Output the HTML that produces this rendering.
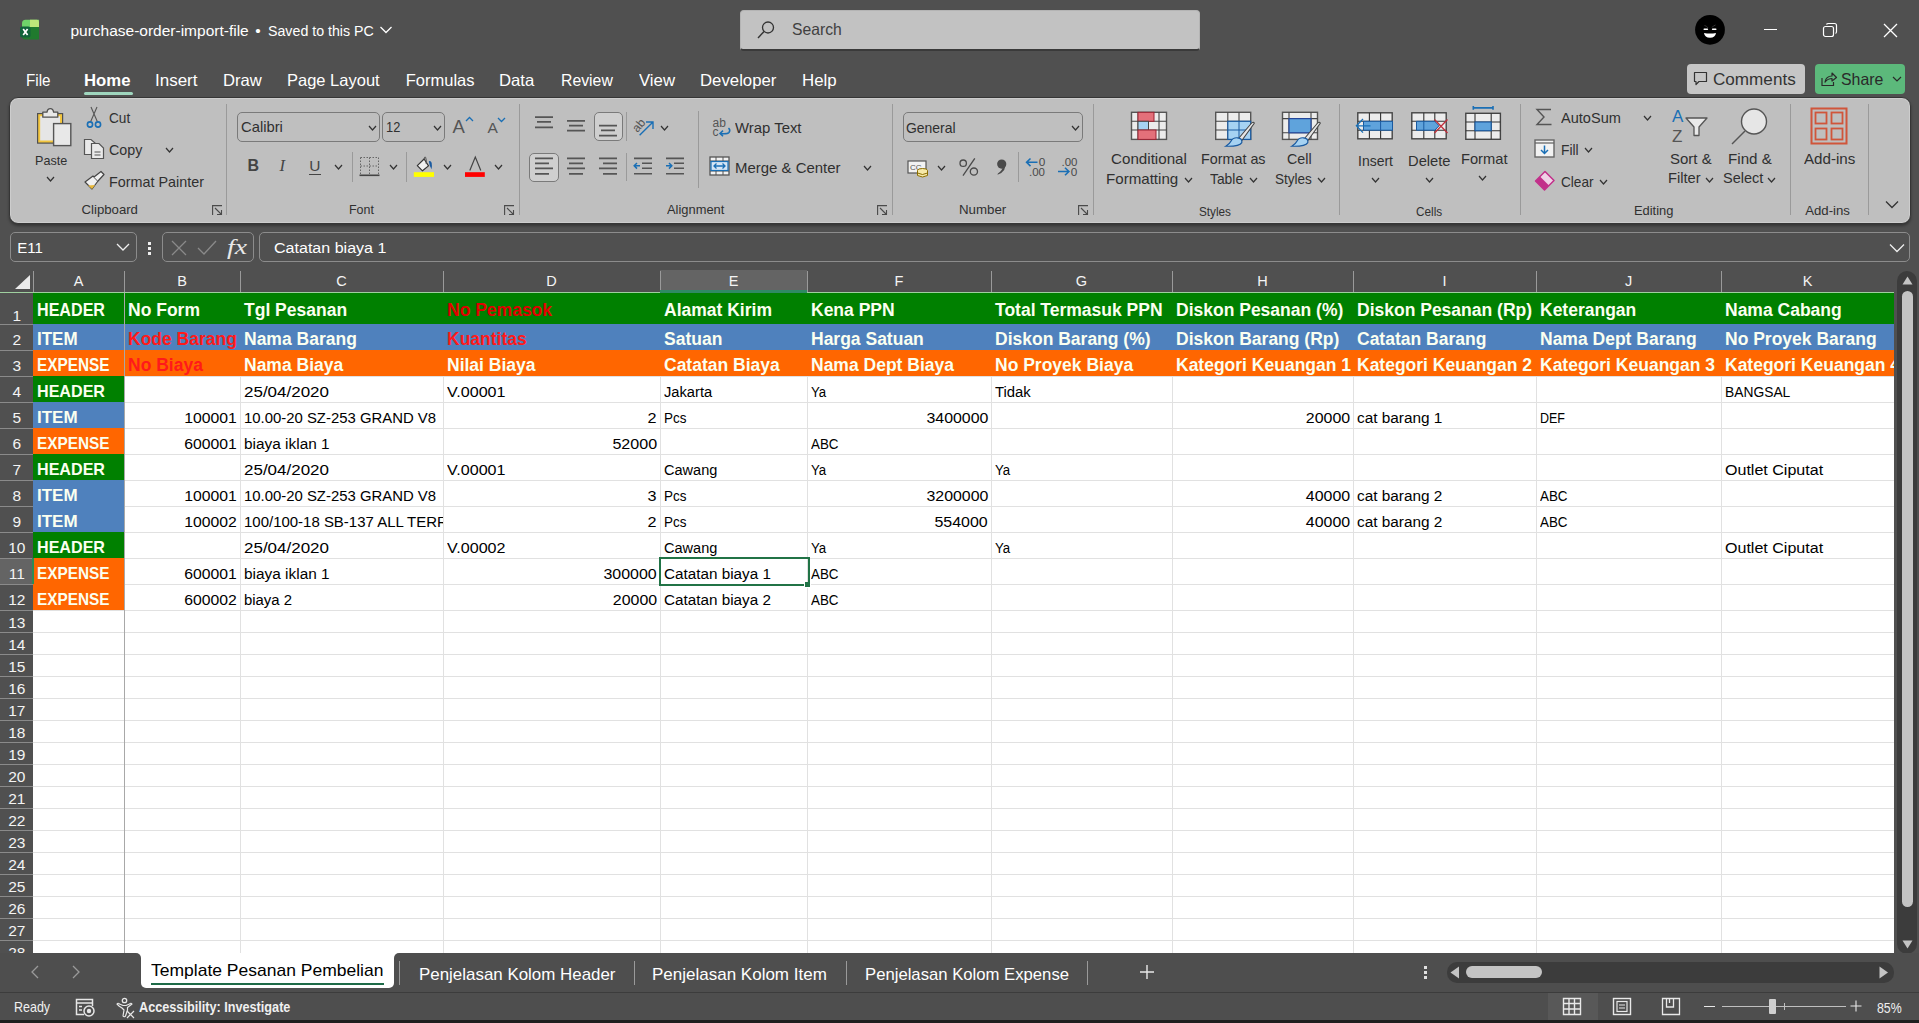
<!DOCTYPE html>
<html><head><meta charset="utf-8"><title>Excel</title><style>*{margin:0;padding:0;box-sizing:border-box}
html,body{width:1919px;height:1023px;overflow:hidden;background:#505050;font-family:"Liberation Sans",sans-serif;color:#fff;position:relative}
.a{position:absolute}
.t{position:absolute;white-space:nowrap}
svg.a{overflow:visible}
</style></head><body>
<svg class="a" style="left:19px;top:19px;" width="22" height="22" viewBox="0 0 22 22"><path d="M3 4.5 Q3 0.8 6.5 0.8 H20 V8 H3 Z" fill="#6fd36a"/><path d="M11 0.8 H18 Q20 0.8 20 3 V8 H11 Z" fill="#bfe67a"/><path d="M3 8 H20 V20.5 H6.5 Q3 20.5 3 17 Z" fill="#207a2e"/><rect x="1" y="7.4" width="10.5" height="11" rx="2" fill="#10633a"/><path d="M4.2 10 L8.6 16 M8.6 10 L4.2 16" stroke="#fff" stroke-width="1.7"/></svg>
<div class="t" style="left:70.40px;top:22.88px;font-size:15.5px;line-height:15.5px;color:#ffffff;">purchase-order-import-file</div>
<div class="t" style="left:255.30px;top:23.38px;font-size:15.5px;line-height:15.5px;color:#fff;">•</div>
<div class="t" style="left:268.00px;top:22.88px;font-size:15.5px;line-height:15.5px;color:#fff;transform:scaleX(0.9164);transform-origin:0 0;">Saved to this PC</div>
<svg class="a" style="left:379px;top:25px;" width="14" height="10" viewBox="0 0 14 10"><path d="M1.5 2 L7 7.5 L12.5 2" stroke="#fff" stroke-width="1.3" fill="none"/></svg>
<div class="a" style="left:740px;top:10px;width:460px;height:41px;background:#c2c2c2;border-radius:4px;border:1px solid #b4b4b4;border-bottom:2px solid #3a3a3a"></div>
<svg class="a" style="left:756px;top:20px;" width="20" height="20" viewBox="0 0 20 20"><circle cx="12" cy="7.5" r="5.5" stroke="#333" stroke-width="1.3" fill="none"/><path d="M8 11.5 L2 18" stroke="#333" stroke-width="1.4"/></svg>
<div class="t" style="left:792.30px;top:21.23px;font-size:16.5px;line-height:16.5px;color:#404040;transform:scaleX(0.9506);transform-origin:0 0;">Search</div>
<svg class="a" style="left:1695px;top:15px;" width="30" height="30" viewBox="0 0 30 30"><circle cx="15" cy="14.8" r="14.9" fill="#000"/><path d="M9 18 Q15 19.2 21 18 Q20.3 22.8 15 22.8 Q9.7 22.8 9 18Z" fill="#fff"/><path d="M9.2 14.3 H12.4 M17.6 14.3 H20.8" stroke="#fff" stroke-width="1.5" stroke-linecap="round"/><path d="M9.5 10.5 Q12 11 13 13 M20.5 10 Q18 10.8 17 12.5" stroke="#3a3a3a" stroke-width="0.9" fill="none"/></svg>
<div class="a" style="left:1764px;top:29px;width:13px;height:1px;background:#fff"></div>
<svg class="a" style="left:1822px;top:22px;" width="16" height="16" viewBox="0 0 16 16"><rect x="1.5" y="4.5" width="10" height="10" rx="2" stroke="#fff" stroke-width="1.2" fill="none"/><path d="M4.5 2.5 Q4.8 1.5 6.5 1.5 L12.5 1.5 Q14.5 1.5 14.5 3.5 L14.5 9.5 Q14.5 11 13.5 11.5" stroke="#fff" stroke-width="1.2" fill="none"/></svg>
<svg class="a" style="left:1883px;top:23px;" width="15" height="15" viewBox="0 0 15 15"><path d="M1 1 L14 14 M14 1 L1 14" stroke="#fff" stroke-width="1.3"/></svg>
<div class="t" style="left:26.25px;top:72.23px;font-size:16.5px;line-height:16.5px;color:#ffffff;transform:scaleX(0.9215);transform-origin:0 0;">File</div>
<div class="t" style="left:155.00px;top:72.23px;font-size:16.5px;line-height:16.5px;color:#ffffff;transform:scaleX(1.0299);transform-origin:0 0;">Insert</div>
<div class="t" style="left:223.25px;top:72.23px;font-size:16.5px;line-height:16.5px;color:#ffffff;transform:scaleX(1.0064);transform-origin:0 0;">Draw</div>
<div class="t" style="left:287.00px;top:72.23px;font-size:16.5px;line-height:16.5px;color:#ffffff;">Page Layout</div>
<div class="t" style="left:405.75px;top:72.23px;font-size:16.5px;line-height:16.5px;color:#ffffff;">Formulas</div>
<div class="t" style="left:499.20px;top:72.23px;font-size:16.5px;line-height:16.5px;color:#ffffff;transform:scaleX(1.0128);transform-origin:0 0;">Data</div>
<div class="t" style="left:561.20px;top:72.23px;font-size:16.5px;line-height:16.5px;color:#ffffff;transform:scaleX(0.9575);transform-origin:0 0;">Review</div>
<div class="t" style="left:639.00px;top:72.23px;font-size:16.5px;line-height:16.5px;color:#ffffff;transform:scaleX(1.0150);transform-origin:0 0;">View</div>
<div class="t" style="left:700.20px;top:72.23px;font-size:16.5px;line-height:16.5px;color:#ffffff;transform:scaleX(1.0158);transform-origin:0 0;">Developer</div>
<div class="t" style="left:801.80px;top:72.23px;font-size:16.5px;line-height:16.5px;color:#ffffff;transform:scaleX(1.0196);transform-origin:0 0;">Help</div>
<div class="t" style="left:84.20px;top:72.23px;font-size:16.5px;line-height:16.5px;color:#ffffff;font-weight:bold;transform:scaleX(1.0143);transform-origin:0 0;">Home</div>
<div class="a" style="left:84px;top:92px;width:49px;height:3px;background:#9fd6be;border-radius:2px"></div>
<div class="a" style="left:1687px;top:64px;width:118px;height:30px;background:#c6c6c6;border-radius:4px"></div>
<svg class="a" style="left:1693px;top:71px;" width="16" height="16" viewBox="0 0 16 16"><path d="M1.5 1.5 H13.5 V10.5 H6 L3 13.5 V10.5 H1.5 Z" stroke="#333" stroke-width="1.2" fill="none" stroke-linejoin="round"/></svg>
<div class="t" style="left:1713.00px;top:71.03px;font-size:16.5px;line-height:16.5px;color:#333333;transform:scaleX(1.0367);transform-origin:0 0;">Comments</div>
<div class="a" style="left:1815px;top:64px;width:90px;height:30px;background:#5cb97b;border-radius:4px"></div>
<svg class="a" style="left:1820px;top:70px;" width="18" height="18" viewBox="0 0 18 18"><path d="M2 8 V15.5 H13.5 V12" stroke="#2a2a2a" stroke-width="1.2" fill="none"/><path d="M5 12 Q6 6 12 6 V3 L16.5 7.5 L12 11 V8.5 Q8 8.5 5 12Z" stroke="#2a2a2a" stroke-width="1.2" fill="none" stroke-linejoin="round"/></svg>
<div class="t" style="left:1841.40px;top:71.03px;font-size:16.5px;line-height:16.5px;color:#2a2a2a;transform:scaleX(0.9629);transform-origin:0 0;">Share</div>
<svg class="a" style="left:1892px;top:75px;" width="10" height="8" viewBox="0 0 10 8"><path d="M1 2 L5 6 L9 2" stroke="#2a2a2a" stroke-width="1.2" fill="none"/></svg>
<div class="a" style="left:9px;top:97px;width:1902px;height:127px;background:#bfbfbf;border-radius:9px;border:1px solid #363636;box-shadow:inset 0 0 0 1px #cdcdcd, 0 2px 3px rgba(0,0,0,0.35)"></div>
<svg class="a" style="left:35px;top:106px;" width="40" height="42" viewBox="0 0 40 42"><rect x="2.6" y="7.6" width="25" height="29.5" fill="#f3c63f" stroke="#505050" stroke-width="1.2"/><rect x="5.2" y="10.2" width="19.8" height="24.3" fill="#e6e6e6"/><path d="M7.8 11.2 V6.2 H12 Q12.5 2.6 15.3 2.6 Q18.1 2.6 18.6 6.2 H22.8 V11.2 Z" fill="#e8e8e8" stroke="#505050" stroke-width="1.3" stroke-linejoin="round"/><rect x="18.6" y="17.6" width="17.2" height="22" fill="#e8e8e8" stroke="#555" stroke-width="1.4"/></svg>
<div class="t" style="left:34.80px;top:154.30px;font-size:13px;line-height:13px;color:#303030;transform:scaleX(0.9686);transform-origin:0 0;">Paste</div>
<svg class="a" style="left:46px;top:176px;" width="9" height="6" viewBox="0 0 9 6"><path d="M1 1 L4.5 5 L8 1" stroke="#333" stroke-width="1.2" fill="none"/></svg>
<svg class="a" style="left:86px;top:106px;" width="16" height="23" viewBox="0 0 16 23"><path d="M4.5 16 L11 1 M11.5 16 L5 1" stroke="#555" stroke-width="1.1" fill="none"/><circle cx="4" cy="18.5" r="2.6" fill="none" stroke="#1a6fb5" stroke-width="1.6"/><circle cx="12" cy="18.5" r="2.6" fill="none" stroke="#1a6fb5" stroke-width="1.6"/></svg>
<div class="t" style="left:109.40px;top:110.95px;font-size:14px;line-height:14px;color:#303030;transform:scaleX(0.9730);transform-origin:0 0;">Cut</div>
<svg class="a" style="left:83px;top:138px;" width="23" height="22" viewBox="0 0 23 22"><path d="M1.5 1.5 H8 L12 5 V16.5 H1.5 Z" fill="#e9e9e9" stroke="#555" stroke-width="1.2"/><path d="M8.5 5.5 H16 L20.5 10 V20.5 H8.5 Z" fill="#e9e9e9" stroke="#555" stroke-width="1.2"/><path d="M11.5 14 H17.5 M11.5 17 H17.5" stroke="#555" stroke-width="1.1"/></svg>
<div class="t" style="left:109.40px;top:142.55px;font-size:14px;line-height:14px;color:#303030;transform:scaleX(1.0189);transform-origin:0 0;">Copy</div>
<svg class="a" style="left:165px;top:147px;" width="9" height="6" viewBox="0 0 9 6"><path d="M1 1 L4.5 5 L8 1" stroke="#333" stroke-width="1.2" fill="none"/></svg>
<svg class="a" style="left:83px;top:170px;" width="23" height="21" viewBox="0 0 23 21"><path d="M2 12 L10 6 L15 11 L9 19 Z" fill="#f0f0f0" stroke="#444" stroke-width="1.2" stroke-linejoin="round"/><path d="M5 15.5 L9 19 L12 15 Z" fill="#e8b83a"/><path d="M11 7 L18 1.5 L21 4.5 L15 11" fill="#f0f0f0" stroke="#444" stroke-width="1.2" stroke-linejoin="round"/></svg>
<div class="t" style="left:109.40px;top:174.98px;font-size:14.2px;line-height:14.2px;color:#303030;transform:scaleX(1.0116);transform-origin:0 0;">Format Painter</div>
<div class="t" style="left:81.50px;top:202.63px;font-size:13.2px;line-height:13.2px;color:#303030;">Clipboard</div>
<svg class="a" style="left:211.5px;top:204.5px;" width="11" height="11" viewBox="0 0 11 11"><path d="M0.5 0.5 H10.5 V10.5 H0.5 Z" stroke="none" fill="none"/><path d="M0.6 10 V0.6 H10" stroke="#4a4a4a" stroke-width="1.1" fill="none"/><path d="M3 3 L9.5 9.5 M9.5 5 V9.5 H5" stroke="#4a4a4a" stroke-width="1.1" fill="none"/></svg>
<div class="a" style="left:226px;top:104px;width:1px;height:111px;background:#9a9a9a"></div>
<div class="a" style="left:237px;top:112px;width:143px;height:30px;border:1px solid #7a7a7a;border-radius:5px"></div>
<div class="t" style="left:240.60px;top:120.43px;font-size:14.5px;line-height:14.5px;color:#303030;transform:scaleX(1.0196);transform-origin:0 0;">Calibri</div>
<svg class="a" style="left:368px;top:125px;" width="9" height="6" viewBox="0 0 9 6"><path d="M1 1 L4.5 5 L8 1" stroke="#333" stroke-width="1.2" fill="none"/></svg>
<div class="a" style="left:382px;top:112px;width:63px;height:30px;border:1px solid #7a7a7a;border-radius:5px"></div>
<div class="t" style="left:386.00px;top:120.43px;font-size:14.5px;line-height:14.5px;color:#303030;transform:scaleX(0.8866);transform-origin:0 0;">12</div>
<svg class="a" style="left:433px;top:125px;" width="9" height="6" viewBox="0 0 9 6"><path d="M1 1 L4.5 5 L8 1" stroke="#333" stroke-width="1.2" fill="none"/></svg>
<div class="t" style="left:452.50px;top:117.64px;font-size:18.5px;line-height:18.5px;color:#555;">A</div>
<svg class="a" style="left:465px;top:116px;" width="9" height="6" viewBox="0 0 9 6"><path d="M1 5 L4.5 1.5 L8 5" stroke="#1a6fb5" stroke-width="1.3" fill="none"/></svg>
<div class="t" style="left:487.50px;top:120.18px;font-size:15.5px;line-height:15.5px;color:#555;">A</div>
<svg class="a" style="left:497px;top:117px;" width="9" height="6" viewBox="0 0 9 6"><path d="M1 1 L4.5 4.5 L8 1" stroke="#1a6fb5" stroke-width="1.3" fill="none"/></svg>
<div class="t" style="left:247.50px;top:157.96px;font-size:16px;line-height:16px;color:#444;font-weight:bold;">B</div>
<div class="t" style="left:279.50px;top:157.53px;font-size:16.5px;line-height:16.5px;color:#444;font-style:italic;font-family:'Liberation Serif';">I</div>
<div class="t" style="left:309.20px;top:158.38px;font-size:15.5px;line-height:15.5px;color:#444;">U</div>
<div class="a" style="left:309px;top:174px;width:12px;height:1.3px;background:#444"></div>
<svg class="a" style="left:334px;top:164px;" width="9" height="6" viewBox="0 0 9 6"><path d="M1 1 L4.5 5 L8 1" stroke="#333" stroke-width="1.2" fill="none"/></svg>
<div class="a" style="left:352px;top:152px;width:1px;height:30px;background:#9a9a9a"></div>
<svg class="a" style="left:359px;top:156px;" width="21" height="21" viewBox="0 0 21 21"><path d="M1.5 1.5 H19.5 M1.5 1.5 V18 M19.5 1.5 V18 M10.5 1.5 V18 M1.5 10 H19.5" stroke="#666" stroke-width="1" stroke-dasharray="1.5 1.5" fill="none"/><path d="M0.5 19.3 H20.5" stroke="#444" stroke-width="1.6"/></svg>
<svg class="a" style="left:389px;top:164px;" width="9" height="6" viewBox="0 0 9 6"><path d="M1 1 L4.5 5 L8 1" stroke="#333" stroke-width="1.2" fill="none"/></svg>
<div class="a" style="left:406px;top:152px;width:1px;height:30px;background:#9a9a9a"></div>
<svg class="a" style="left:405px;top:150px;" width="85" height="30" viewBox="0 0 85 30"><path d="M12.3 15.6 L19.1 9 L23.5 15.9 L17.5 20.8 Z" fill="#f0f0f0" stroke="#333" stroke-width="1.2" stroke-linejoin="round"/><path d="M19.1 9.5 Q19.3 6.2 20.6 7.2 Q21.6 9.5 21.2 14" stroke="#555" stroke-width="1" fill="none"/><path d="M23.8 11.2 Q25.8 10.2 26.7 13 Q27.2 16.2 26.6 19.2 Q24.4 16 23.8 11.2 Z" fill="#1a5aa0"/><rect x="8.8" y="22.2" width="20.2" height="4.7" fill="#ffff00"/><path d="M64.8 20.5 L70.3 7.1 L75.8 20.5" stroke="#444" stroke-width="1.2" fill="none"/><rect x="60" y="22.2" width="19.8" height="4.7" fill="#ff0000"/></svg>
<svg class="a" style="left:443px;top:164px;" width="9" height="6" viewBox="0 0 9 6"><path d="M1 1 L4.5 5 L8 1" stroke="#333" stroke-width="1.2" fill="none"/></svg>
<svg class="a" style="left:494px;top:164px;" width="9" height="6" viewBox="0 0 9 6"><path d="M1 1 L4.5 5 L8 1" stroke="#333" stroke-width="1.2" fill="none"/></svg>
<div class="t" style="left:349.30px;top:202.53px;font-size:13.2px;line-height:13.2px;color:#303030;transform:scaleX(0.9465);transform-origin:0 0;">Font</div>
<svg class="a" style="left:503.5px;top:204.5px;" width="11" height="11" viewBox="0 0 11 11"><path d="M0.5 0.5 H10.5 V10.5 H0.5 Z" stroke="none" fill="none"/><path d="M0.6 10 V0.6 H10" stroke="#4a4a4a" stroke-width="1.1" fill="none"/><path d="M3 3 L9.5 9.5 M9.5 5 V9.5 H5" stroke="#4a4a4a" stroke-width="1.1" fill="none"/></svg>
<div class="a" style="left:518.5px;top:104px;width:1px;height:111px;background:#9a9a9a"></div>
<svg class="a" style="left:530px;top:110px;" width="30" height="35" viewBox="0 0 30 35"><path d="M5 7.2 H23 M7 11.8 H21 M5 17.3 H23" stroke="#555" stroke-width="1.7"/></svg>
<svg class="a" style="left:562px;top:110px;" width="30" height="35" viewBox="0 0 30 35"><path d="M5 10.8 H23 M7 15.7 H21 M5 20.7 H23" stroke="#555" stroke-width="1.7"/></svg>
<div class="a" style="left:593.5px;top:112px;width:29px;height:29px;border:1px solid #7a7a7a;border-radius:5px;background:#cfcfcf"></div>
<svg class="a" style="left:593px;top:110px;" width="30" height="35" viewBox="0 0 30 35"><path d="M6 15.7 H24 M8 20.3 H22 M6 25.6 H24" stroke="#555" stroke-width="1.7"/></svg>
<div class="a" style="left:625.5px;top:112px;width:1px;height:29px;background:#9a9a9a"></div>
<svg class="a" style="left:625px;top:108px;" width="40" height="34" viewBox="0 0 40 34"><text x="0" y="0" font-family="Liberation Sans" font-size="12" fill="#555" transform="translate(12.5 25) rotate(-50)">ab</text><path d="M14.6 27.2 L27.5 14.5 M21 14 H28 V21" stroke="#1a6fb5" stroke-width="1.4" fill="none"/></svg>
<svg class="a" style="left:660px;top:125px;" width="9" height="6" viewBox="0 0 9 6"><path d="M1 1 L4.5 5 L8 1" stroke="#333" stroke-width="1.2" fill="none"/></svg>
<div class="a" style="left:697.5px;top:111px;width:1px;height:77px;background:#9a9a9a"></div>
<svg class="a" style="left:708px;top:108px;" width="30" height="34" viewBox="0 0 30 34"><text x="4.5" y="18.6" font-family="Liberation Sans" font-size="12" fill="#555">ab</text><text x="4.5" y="27.9" font-family="Liberation Sans" font-size="12" fill="#555">c</text><path d="M20.5 20 Q22.8 22 21 24.5 Q19.5 26.2 12.5 25.6 M15 22.6 L12 25.4 L15 28.2" stroke="#1a6fb5" stroke-width="1.5" fill="none"/></svg>
<div class="t" style="left:735.20px;top:120.93px;font-size:14.5px;line-height:14.5px;color:#303030;transform:scaleX(1.0272);transform-origin:0 0;">Wrap Text</div>
<div class="a" style="left:529px;top:152.5px;width:30px;height:29px;border:1px solid #7a7a7a;border-radius:5px;background:#cfcfcf"></div>
<svg class="a" style="left:530px;top:150px;" width="30" height="35" viewBox="0 0 30 35"><path d="M5 8.4 H23 M5 13.3 H19 M5 18.3 H23 M5 23.8 H19" stroke="#555" stroke-width="1.7"/></svg>
<svg class="a" style="left:562px;top:150px;" width="30" height="35" viewBox="0 0 30 35"><path d="M5 8.4 H23 M7 13.3 H21 M5 18.3 H23 M7 23.8 H21" stroke="#555" stroke-width="1.7"/></svg>
<svg class="a" style="left:594px;top:150px;" width="30" height="35" viewBox="0 0 30 35"><path d="M5 8.4 H23 M9 13.3 H23 M5 18.3 H23 M9 23.8 H23" stroke="#555" stroke-width="1.7"/></svg>
<div class="a" style="left:625.5px;top:152.5px;width:1px;height:28.5px;background:#9a9a9a"></div>
<svg class="a" style="left:632px;top:150px;" width="24" height="30" viewBox="0 0 24 30"><path d="M2 8.4 H20 M10 13.3 H20 M10 18.3 H20 M2 23.8 H20" stroke="#555" stroke-width="1.6"/><path d="M8 15.8 H2.5 M5 13 L2.2 15.8 L5 18.6" stroke="#1a6fb5" stroke-width="1.5" fill="none"/></svg>
<svg class="a" style="left:664px;top:150px;" width="24" height="30" viewBox="0 0 24 30"><path d="M2 8.4 H20 M10 13.3 H20 M10 18.3 H20 M2 23.8 H20" stroke="#555" stroke-width="1.6"/><path d="M2 15.8 H7.5 M5 13 L7.8 15.8 L5 18.6" stroke="#1a6fb5" stroke-width="1.5" fill="none"/></svg>
<svg class="a" style="left:709px;top:156px;" width="21" height="21" viewBox="0 0 21 21"><rect x="1" y="1" width="19" height="18" fill="#f2f2f2" stroke="#555" stroke-width="1.3"/><path d="M1 5 H20 M1 15 H20 M7 1 V5 M14 1 V5 M7 15 V19 M14 15 V19" stroke="#555" stroke-width="1"/><rect x="2" y="5.5" width="17" height="9" fill="#d6e6f5" stroke="#1a6fb5" stroke-width="1.2"/><path d="M5 10 H16 M7.5 7.5 L5 10 L7.5 12.5 M13.5 7.5 L16 10 L13.5 12.5" stroke="#1a6fb5" stroke-width="1.3" fill="none"/></svg>
<div class="t" style="left:735.20px;top:160.93px;font-size:14.5px;line-height:14.5px;color:#303030;transform:scaleX(1.0308);transform-origin:0 0;">Merge &amp; Center</div>
<svg class="a" style="left:863px;top:165px;" width="9" height="6" viewBox="0 0 9 6"><path d="M1 1 L4.5 5 L8 1" stroke="#333" stroke-width="1.2" fill="none"/></svg>
<div class="t" style="left:666.50px;top:203.03px;font-size:13.2px;line-height:13.2px;color:#303030;transform:scaleX(0.9779);transform-origin:0 0;">Alignment</div>
<svg class="a" style="left:877px;top:204.5px;" width="11" height="11" viewBox="0 0 11 11"><path d="M0.5 0.5 H10.5 V10.5 H0.5 Z" stroke="none" fill="none"/><path d="M0.6 10 V0.6 H10" stroke="#4a4a4a" stroke-width="1.1" fill="none"/><path d="M3 3 L9.5 9.5 M9.5 5 V9.5 H5" stroke="#4a4a4a" stroke-width="1.1" fill="none"/></svg>
<div class="a" style="left:892px;top:104px;width:1px;height:111px;background:#9a9a9a"></div>
<div class="a" style="left:903px;top:112px;width:180px;height:30px;border:1px solid #7a7a7a;border-radius:5px"></div>
<div class="t" style="left:906.40px;top:120.63px;font-size:14.5px;line-height:14.5px;color:#303030;transform:scaleX(0.9615);transform-origin:0 0;">General</div>
<svg class="a" style="left:1071px;top:125px;" width="9" height="6" viewBox="0 0 9 6"><path d="M1 1 L4.5 5 L8 1" stroke="#333" stroke-width="1.2" fill="none"/></svg>
<svg class="a" style="left:907px;top:160px;" width="22" height="18" viewBox="0 0 22 18"><rect x="1" y="1" width="18" height="12" fill="#f2f2f2" stroke="#555" stroke-width="1.2"/><text x="3" y="10" font-family="Liberation Sans" font-size="8" fill="#555">CC</text><ellipse cx="15.5" cy="10.5" rx="5" ry="2" fill="#f6e9a8" stroke="#8a6d00" stroke-width="1"/><path d="M10.5 10.5 V15.5 Q15.5 18.5 20.5 15.5 V10.5 M10.5 13 Q15.5 16 20.5 13" fill="#f6e9a8" stroke="#8a6d00" stroke-width="1"/></svg>
<svg class="a" style="left:937px;top:165px;" width="9" height="6" viewBox="0 0 9 6"><path d="M1 1 L4.5 5 L8 1" stroke="#333" stroke-width="1.2" fill="none"/></svg>
<svg class="a" style="left:950px;top:150px;" width="40" height="35" viewBox="0 0 40 35"><circle cx="13.2" cy="13.2" r="3.2" stroke="#4a4a4a" stroke-width="1.3" fill="none"/><circle cx="23.9" cy="21.6" r="3.6" stroke="#4a4a4a" stroke-width="1.3" fill="none"/><path d="M24.8 8.3 L13 25.7" stroke="#4a4a4a" stroke-width="1.3"/></svg>
<svg class="a" style="left:990px;top:150px;" width="25" height="35" viewBox="0 0 25 35"><circle cx="11.7" cy="14.1" r="4.6" fill="#4a4a4a"/><path d="M14.8 11.5 Q17.5 21 7.5 24.8 L7.9 23.5 Q13 20 12.5 16.5 Z" fill="#4a4a4a"/></svg>
<div class="a" style="left:1018px;top:152px;width:1px;height:30px;background:#9a9a9a"></div>
<svg class="a" style="left:1020px;top:150px;" width="30" height="30" viewBox="0 0 30 30"><path d="M17.5 12.3 H7 M10.5 8.5 L6.6 12.3 L10.5 16.1" stroke="#1a6fb5" stroke-width="1.6" fill="none"/><text x="18.8" y="15.5" font-family="Liberation Sans" font-size="11.8" fill="#4a4a4a" transform="scale(1 1)">0</text><text x="9" y="25.7" font-family="Liberation Sans" font-size="11.8" fill="#4a4a4a" textLength="16" lengthAdjust="spacingAndGlyphs">.00</text></svg>
<svg class="a" style="left:1055px;top:150px;" width="30" height="30" viewBox="0 0 30 30"><text x="6.5" y="15.5" font-family="Liberation Sans" font-size="11.8" fill="#4a4a4a" textLength="16" lengthAdjust="spacingAndGlyphs">.00</text><path d="M3 21.5 H13.5 M10 17.7 L13.9 21.5 L10 25.3" stroke="#1a6fb5" stroke-width="1.6" fill="none"/><text x="15.8" y="25.7" font-family="Liberation Sans" font-size="11.8" fill="#4a4a4a">0</text></svg>
<div class="t" style="left:958.50px;top:202.63px;font-size:13.2px;line-height:13.2px;color:#303030;transform:scaleX(1.0075);transform-origin:0 0;">Number</div>
<svg class="a" style="left:1077.5px;top:204.5px;" width="11" height="11" viewBox="0 0 11 11"><path d="M0.5 0.5 H10.5 V10.5 H0.5 Z" stroke="none" fill="none"/><path d="M0.6 10 V0.6 H10" stroke="#4a4a4a" stroke-width="1.1" fill="none"/><path d="M3 3 L9.5 9.5 M9.5 5 V9.5 H5" stroke="#4a4a4a" stroke-width="1.1" fill="none"/></svg>
<div class="a" style="left:1092.5px;top:104px;width:1px;height:111px;background:#9a9a9a"></div>
<svg class="a" style="left:1130px;top:111px;" width="40" height="32" viewBox="0 0 40 32"><rect x="1.5" y="1.3" width="35" height="27.1" fill="#ececec" stroke="#555" stroke-width="1.4"/><path d="M1.5 10.3 H36.5 M1.5 19 H36.5 M8 1.3 V28.4 M29 1.3 V28.4" stroke="#444" stroke-width="1.1"/><rect x="8" y="1.3" width="16" height="9" fill="#e4707a" stroke="#9b2332" stroke-width="1"/><rect x="8" y="10.3" width="10.5" height="8.7" fill="#a6d2f2" stroke="#444" stroke-width="1"/><rect x="8" y="19" width="18" height="9.4" fill="#e4707a" stroke="#9b2332" stroke-width="1"/></svg>
<div class="t" style="left:1111.20px;top:151.88px;font-size:14.2px;line-height:14.2px;color:#303030;transform:scaleX(1.0697);transform-origin:0 0;">Conditional</div>
<div class="t" style="left:1106.10px;top:171.78px;font-size:14.2px;line-height:14.2px;color:#303030;transform:scaleX(1.0653);transform-origin:0 0;">Formatting</div>
<svg class="a" style="left:1184px;top:177px;" width="9" height="6" viewBox="0 0 9 6"><path d="M1 1 L4.5 5 L8 1" stroke="#333" stroke-width="1.2" fill="none"/></svg>
<svg class="a" style="left:1214px;top:111px;" width="44" height="38" viewBox="0 0 44 38"><rect x="1.7" y="1.3" width="35" height="27.1" fill="#ececec" stroke="#555" stroke-width="1.4"/><path d="M1.7 10.3 H36.7 M1.7 19 H36.7 M13.8 1.3 V28.4 M25 1.3 V28.4" stroke="#444" stroke-width="1.1"/><rect x="13.8" y="10.3" width="22.9" height="18.1" fill="#a6d2f2" stroke="#1a5aa0" stroke-width="1.2"/><path d="M13.8 19 H36.7 M25 10.3 V28.4" stroke="#1a5aa0" stroke-width="1"/><path d="M24.5 27.5 L37.2 12.5 Q39.5 10 40.3 12.3 L27.5 30 Z" fill="#e6e6e6" stroke="#444" stroke-width="1.1" stroke-linejoin="round"/><path d="M23.5 26.8 Q28.6 27.3 27.8 31.6 Q25.5 35.6 11.8 35.2 Q15.8 32.8 16.9 30.3 Q18.9 26.4 23.5 26.8 Z" fill="#a6d2f2" stroke="#1a5aa0" stroke-width="1.2"/></svg>
<div class="t" style="left:1201.40px;top:151.88px;font-size:14.2px;line-height:14.2px;color:#303030;transform:scaleX(1.0107);transform-origin:0 0;">Format as</div>
<div class="t" style="left:1210.00px;top:171.78px;font-size:14.2px;line-height:14.2px;color:#303030;transform:scaleX(0.9751);transform-origin:0 0;">Table</div>
<svg class="a" style="left:1249px;top:177px;" width="9" height="6" viewBox="0 0 9 6"><path d="M1 1 L4.5 5 L8 1" stroke="#333" stroke-width="1.2" fill="none"/></svg>
<svg class="a" style="left:1281px;top:111px;" width="44" height="38" viewBox="0 0 44 38"><rect x="1.5" y="1.3" width="35" height="27.1" fill="#ececec" stroke="#555" stroke-width="1.4"/><path d="M1.5 7.6 H36.5 M1.5 21.8 H36.5 M8 1.3 V28.4 M30 1.3 V28.4" stroke="#444" stroke-width="1.1"/><rect x="8" y="7.6" width="22" height="14.2" fill="#5fa3dc" stroke="#24479a" stroke-width="1.2"/><path d="M23.5 27.5 L36.2 12.5 Q38.5 10 39.3 12.3 L26.5 30 Z" fill="#e6e6e6" stroke="#444" stroke-width="1.1" stroke-linejoin="round"/><path d="M22.5 26.8 Q27.6 27.3 26.8 31.6 Q24.5 35.6 10.8 35.2 Q14.8 32.8 15.9 30.3 Q17.9 26.4 22.5 26.8 Z" fill="#a6d2f2" stroke="#1a5aa0" stroke-width="1.2"/></svg>
<div class="t" style="left:1286.90px;top:151.88px;font-size:14.2px;line-height:14.2px;color:#303030;transform:scaleX(1.0057);transform-origin:0 0;">Cell</div>
<div class="t" style="left:1274.60px;top:171.78px;font-size:14.2px;line-height:14.2px;color:#303030;transform:scaleX(0.9542);transform-origin:0 0;">Styles</div>
<svg class="a" style="left:1317px;top:177px;" width="9" height="6" viewBox="0 0 9 6"><path d="M1 1 L4.5 5 L8 1" stroke="#333" stroke-width="1.2" fill="none"/></svg>
<div class="t" style="left:1198.50px;top:204.63px;font-size:13.2px;line-height:13.2px;color:#303030;transform:scaleX(0.8902);transform-origin:0 0;">Styles</div>
<div class="a" style="left:1338.5px;top:104px;width:1px;height:111px;background:#9a9a9a"></div>
<svg class="a" style="left:1355px;top:111px;" width="42" height="30" viewBox="0 0 42 30"><rect x="2.8" y="1.8" width="34.4" height="26" fill="#ececec" stroke="#444" stroke-width="1.4"/><path d="M2.8 10.3 H37.2 M2.8 19.2 H37.2 M14.4 1.8 V27.8 M25.6 1.8 V27.8" stroke="#333" stroke-width="1.1"/><rect x="8.5" y="10.3" width="29" height="8.9" fill="#5fa3dc" stroke="#1a5aa0" stroke-width="1"/><path d="M25.6 10.3 V19.2" stroke="#1a5aa0" stroke-width="1"/><path d="M15.5 14.8 H1.5 M8 8 L1.4 14.8 L8 21.6" stroke="#1a6fb5" stroke-width="1.3" fill="none"/></svg>
<div class="t" style="left:1357.80px;top:154.08px;font-size:14.2px;line-height:14.2px;color:#303030;transform:scaleX(0.9855);transform-origin:0 0;">Insert</div>
<svg class="a" style="left:1370.5px;top:177px;" width="9" height="6" viewBox="0 0 9 6"><path d="M1 1 L4.5 5 L8 1" stroke="#333" stroke-width="1.2" fill="none"/></svg>
<svg class="a" style="left:1410px;top:111px;" width="42" height="30" viewBox="0 0 42 30"><rect x="1.8" y="1.8" width="34.4" height="26" fill="#ececec" stroke="#444" stroke-width="1.4"/><path d="M1.8 10.3 H36.2 M1.8 19.2 H36.2 M13.8 1.8 V27.8 M24.8 1.8 V27.8" stroke="#333" stroke-width="1.1"/><path d="M6.5 10.3 H24.8 L29 14.8 L24.8 19.2 H6.5 Z" fill="#5fa3dc" stroke="#1a5aa0" stroke-width="1"/><path d="M13.8 10.3 V19.2" stroke="#1a5aa0" stroke-width="1"/><path d="M24.5 8.5 L37.5 22 M37.5 8.5 L24.5 22" stroke="#c0303c" stroke-width="1.3"/></svg>
<div class="t" style="left:1408.00px;top:154.08px;font-size:14.2px;line-height:14.2px;color:#303030;transform:scaleX(1.0378);transform-origin:0 0;">Delete</div>
<svg class="a" style="left:1425px;top:177px;" width="9" height="6" viewBox="0 0 9 6"><path d="M1 1 L4.5 5 L8 1" stroke="#333" stroke-width="1.2" fill="none"/></svg>
<svg class="a" style="left:1464px;top:104px;" width="40" height="38" viewBox="0 0 40 38"><path d="M9.3 3.9 H29 M9.3 2 V5.8 M29 2 V5.8" stroke="#1a6fb5" stroke-width="1.6"/><rect x="1.8" y="9.3" width="34.6" height="26" fill="#ececec" stroke="#444" stroke-width="1.4"/><path d="M1.8 18 H36.4 M1.8 26.7 H36.4 M11 9.3 V35.3 M27.2 9.3 V35.3" stroke="#333" stroke-width="1.1"/><rect x="11" y="18" width="16.2" height="8.7" fill="#5fa3dc" stroke="#1a5aa0" stroke-width="1.1"/></svg>
<div class="t" style="left:1460.70px;top:151.88px;font-size:14.2px;line-height:14.2px;color:#303030;transform:scaleX(1.0340);transform-origin:0 0;">Format</div>
<svg class="a" style="left:1478px;top:175px;" width="9" height="6" viewBox="0 0 9 6"><path d="M1 1 L4.5 5 L8 1" stroke="#333" stroke-width="1.2" fill="none"/></svg>
<div class="t" style="left:1415.50px;top:204.63px;font-size:13.2px;line-height:13.2px;color:#303030;transform:scaleX(0.8930);transform-origin:0 0;">Cells</div>
<div class="a" style="left:1519.5px;top:104px;width:1px;height:111px;background:#9a9a9a"></div>
<svg class="a" style="left:1535px;top:107px;" width="20" height="20" viewBox="0 0 20 20"><path d="M16 2.5 H2 L9 10 L2 17.5 H16.5" stroke="#555" stroke-width="1.4" fill="none"/></svg>
<div class="t" style="left:1560.50px;top:110.68px;font-size:14.2px;line-height:14.2px;color:#303030;transform:scaleX(1.0255);transform-origin:0 0;">AutoSum</div>
<svg class="a" style="left:1643px;top:115px;" width="9" height="6" viewBox="0 0 9 6"><path d="M1 1 L4.5 5 L8 1" stroke="#333" stroke-width="1.2" fill="none"/></svg>
<svg class="a" style="left:1534px;top:139px;" width="22" height="20" viewBox="0 0 22 20"><rect x="1" y="1" width="19" height="17" fill="#f2f2f2" stroke="#666" stroke-width="1.4"/><path d="M1 4 H20" stroke="#666" stroke-width="1.3"/><path d="M10.5 6.5 V14.5 M7 11 L10.5 14.5 L14 11" stroke="#1a6fb5" stroke-width="1.5" fill="none"/></svg>
<div class="t" style="left:1560.50px;top:142.68px;font-size:14.2px;line-height:14.2px;color:#303030;transform:scaleX(0.9758);transform-origin:0 0;">Fill</div>
<svg class="a" style="left:1584px;top:147px;" width="9" height="6" viewBox="0 0 9 6"><path d="M1 1 L4.5 5 L8 1" stroke="#333" stroke-width="1.2" fill="none"/></svg>
<svg class="a" style="left:1534px;top:170px;" width="22" height="22" viewBox="0 0 22 22"><path d="M1.5 11 L11 1.5 L20 10.5 L10.5 20 Z" fill="#f0d2e6" stroke="#c2308a" stroke-width="1.5" stroke-linejoin="round"/><path d="M1.5 11 L6 6.5 L15 15.5 L10.5 20 Z" fill="#c2308a"/></svg>
<div class="t" style="left:1560.50px;top:174.58px;font-size:14.2px;line-height:14.2px;color:#303030;transform:scaleX(0.9607);transform-origin:0 0;">Clear</div>
<svg class="a" style="left:1599px;top:179px;" width="9" height="6" viewBox="0 0 9 6"><path d="M1 1 L4.5 5 L8 1" stroke="#333" stroke-width="1.2" fill="none"/></svg>
<svg class="a" style="left:1671px;top:108px;" width="42" height="36" viewBox="0 0 42 36"><text x="1" y="14" font-family="Liberation Sans" font-size="17" fill="#1a6fb5">A</text><text x="1" y="34" font-family="Liberation Sans" font-size="17" fill="#555">Z</text><path d="M15 10 H36 L28 19 V27.5 H23 V19 Z" fill="#eaeaea" stroke="#555" stroke-width="1.3" stroke-linejoin="round"/></svg>
<div class="t" style="left:1670.30px;top:151.58px;font-size:14.2px;line-height:14.2px;color:#303030;transform:scaleX(1.0568);transform-origin:0 0;">Sort &amp;</div>
<div class="t" style="left:1668.10px;top:171.38px;font-size:14.2px;line-height:14.2px;color:#303030;transform:scaleX(1.0363);transform-origin:0 0;">Filter</div>
<svg class="a" style="left:1705px;top:177px;" width="9" height="6" viewBox="0 0 9 6"><path d="M1 1 L4.5 5 L8 1" stroke="#333" stroke-width="1.2" fill="none"/></svg>
<svg class="a" style="left:1730px;top:107px;" width="40" height="38" viewBox="0 0 40 38"><circle cx="24" cy="14.5" r="12.5" fill="#e6e6e6" stroke="#555" stroke-width="1.4"/><path d="M15 24 L2 37" stroke="#555" stroke-width="1.5"/></svg>
<div class="t" style="left:1727.80px;top:151.58px;font-size:14.2px;line-height:14.2px;color:#303030;transform:scaleX(1.0697);transform-origin:0 0;">Find &amp;</div>
<div class="t" style="left:1723.00px;top:171.38px;font-size:14.2px;line-height:14.2px;color:#303030;transform:scaleX(1.0211);transform-origin:0 0;">Select</div>
<svg class="a" style="left:1767px;top:177px;" width="9" height="6" viewBox="0 0 9 6"><path d="M1 1 L4.5 5 L8 1" stroke="#333" stroke-width="1.2" fill="none"/></svg>
<div class="t" style="left:1634.30px;top:204.23px;font-size:13.2px;line-height:13.2px;color:#303030;transform:scaleX(0.9762);transform-origin:0 0;">Editing</div>
<div class="a" style="left:1789.5px;top:104px;width:1px;height:111px;background:#9a9a9a"></div>
<svg class="a" style="left:1810px;top:107px;" width="38" height="38" viewBox="0 0 38 38"><rect x="1.5" y="1.5" width="35" height="35" fill="none" stroke="#d0553a" stroke-width="2"/><rect x="5.5" y="5.5" width="11" height="11" fill="none" stroke="#d0553a" stroke-width="1.8"/><rect x="21.5" y="5.5" width="11" height="11" fill="none" stroke="#d0553a" stroke-width="1.8"/><rect x="5.5" y="21.5" width="11" height="11" fill="none" stroke="#d0553a" stroke-width="1.8"/><rect x="21.5" y="21.5" width="11" height="11" fill="none" stroke="#d0553a" stroke-width="1.8"/></svg>
<div class="t" style="left:1803.50px;top:151.58px;font-size:14.2px;line-height:14.2px;color:#303030;transform:scaleX(1.0676);transform-origin:0 0;">Add-ins</div>
<div class="t" style="left:1805.20px;top:204.23px;font-size:13.2px;line-height:13.2px;color:#303030;">Add-ins</div>
<div class="a" style="left:1867.5px;top:104px;width:1px;height:111px;background:#9a9a9a"></div>
<svg class="a" style="left:1885px;top:200px;" width="14" height="9" viewBox="0 0 14 9"><path d="M1 1.5 L7 7.5 L13 1.5" stroke="#333" stroke-width="1.3" fill="none"/></svg>
<div class="a" style="left:10px;top:232px;width:127px;height:30px;border:1px solid #8c8c8c;border-radius:5px"></div>
<div class="t" style="left:17.20px;top:240.30px;font-size:15px;line-height:15px;color:#fff;">E11</div>
<svg class="a" style="left:116px;top:242px;" width="14" height="10" viewBox="0 0 14 10"><path d="M1 2 L7 8 L13 2" stroke="#eee" stroke-width="1.3" fill="none"/></svg>
<div class="a" style="left:148px;top:241.5px;width:3px;height:3px;background:#eee"></div>
<div class="a" style="left:148px;top:246.5px;width:3px;height:3px;background:#eee"></div>
<div class="a" style="left:148px;top:251.5px;width:3px;height:3px;background:#eee"></div>
<div class="a" style="left:162px;top:232px;width:92px;height:30px;border:1px solid #8c8c8c;border-radius:5px"></div>
<svg class="a" style="left:170px;top:239px;" width="18" height="18" viewBox="0 0 18 18"><path d="M2 2 L16 16 M16 2 L2 16" stroke="#8a8a8a" stroke-width="1.3"/></svg>
<svg class="a" style="left:197px;top:239px;" width="20" height="16" viewBox="0 0 20 16"><path d="M1 9 L7 15 L19 2" stroke="#8a8a8a" stroke-width="1.3" fill="none"/></svg>
<div class="t" style="left:226.50px;top:236.72px;font-size:21px;line-height:21px;color:#e8e8e8;font-style:italic;font-family:'Liberation Serif';transform:scaleX(1.3196);transform-origin:0 0;">fx</div>
<div class="a" style="left:259px;top:232px;width:1651px;height:30px;border:1px solid #8c8c8c;border-radius:5px"></div>
<div class="t" style="left:273.50px;top:240.38px;font-size:15.5px;line-height:15.5px;color:#fff;transform:scaleX(1.0352);transform-origin:0 0;">Catatan biaya 1</div>
<svg class="a" style="left:1889px;top:243px;" width="16" height="10" viewBox="0 0 16 10"><path d="M1 1.5 L8 8.5 L15 1.5" stroke="#eee" stroke-width="1.3" fill="none"/></svg>
<div class="a" style="left:0px;top:270px;width:1894px;height:23px;background:#505050"></div>
<div class="a" style="left:660px;top:270px;width:147px;height:22px;background:#646464"></div>
<div class="a" style="left:33px;top:271px;width:1px;height:22px;background:#9a9a9a"></div>
<div class="a" style="left:124px;top:271px;width:1px;height:22px;background:#9a9a9a"></div>
<div class="a" style="left:240px;top:271px;width:1px;height:22px;background:#9a9a9a"></div>
<div class="a" style="left:443px;top:271px;width:1px;height:22px;background:#9a9a9a"></div>
<div class="a" style="left:660px;top:271px;width:1px;height:22px;background:#9a9a9a"></div>
<div class="a" style="left:807px;top:271px;width:1px;height:22px;background:#9a9a9a"></div>
<div class="a" style="left:991px;top:271px;width:1px;height:22px;background:#9a9a9a"></div>
<div class="a" style="left:1172px;top:271px;width:1px;height:22px;background:#9a9a9a"></div>
<div class="a" style="left:1353px;top:271px;width:1px;height:22px;background:#9a9a9a"></div>
<div class="a" style="left:1536px;top:271px;width:1px;height:22px;background:#9a9a9a"></div>
<div class="a" style="left:1721px;top:271px;width:1px;height:22px;background:#9a9a9a"></div>
<div class="t" style="left:-221.50px;width:600px;text-align:center;top:274.43px;font-size:14.5px;line-height:14.5px;color:#f4f4f4;">A</div>
<div class="t" style="left:-118.00px;width:600px;text-align:center;top:274.43px;font-size:14.5px;line-height:14.5px;color:#f4f4f4;">B</div>
<div class="t" style="left:41.50px;width:600px;text-align:center;top:274.43px;font-size:14.5px;line-height:14.5px;color:#f4f4f4;">C</div>
<div class="t" style="left:251.50px;width:600px;text-align:center;top:274.43px;font-size:14.5px;line-height:14.5px;color:#f4f4f4;">D</div>
<div class="t" style="left:433.50px;width:600px;text-align:center;top:274.43px;font-size:14.5px;line-height:14.5px;color:#f4f4f4;">E</div>
<div class="t" style="left:599.00px;width:600px;text-align:center;top:274.43px;font-size:14.5px;line-height:14.5px;color:#f4f4f4;">F</div>
<div class="t" style="left:781.50px;width:600px;text-align:center;top:274.43px;font-size:14.5px;line-height:14.5px;color:#f4f4f4;">G</div>
<div class="t" style="left:962.50px;width:600px;text-align:center;top:274.43px;font-size:14.5px;line-height:14.5px;color:#f4f4f4;">H</div>
<div class="t" style="left:1144.50px;width:600px;text-align:center;top:274.43px;font-size:14.5px;line-height:14.5px;color:#f4f4f4;">I</div>
<div class="t" style="left:1328.50px;width:600px;text-align:center;top:274.43px;font-size:14.5px;line-height:14.5px;color:#f4f4f4;">J</div>
<div class="t" style="left:1507.50px;width:600px;text-align:center;top:274.43px;font-size:14.5px;line-height:14.5px;color:#f4f4f4;">K</div>
<svg class="a" style="left:14px;top:274px;" width="18" height="16" viewBox="0 0 18 16"><path d="M16 1 L16 15 L1 15 Z" fill="#eaeaea"/></svg>
<div class="a" style="left:0px;top:292px;width:1894px;height:1px;background:#9fcf9f"></div>
<div class="a" style="left:33px;top:293px;width:1861px;height:660px;background:#fff"></div>
<div class="a" style="left:0px;top:293px;width:33px;height:660px;background:#505050"></div>
<div class="a" style="left:0px;top:558px;width:33px;height:26px;background:#646464"></div>
<div class="a" style="left:33px;top:324px;width:1861px;height:1px;background:#e1e1e1"></div>
<div class="a" style="left:0px;top:324px;width:33px;height:1px;background:#8a8a8a"></div>
<div class="a" style="left:33px;top:350px;width:1861px;height:1px;background:#e1e1e1"></div>
<div class="a" style="left:0px;top:350px;width:33px;height:1px;background:#8a8a8a"></div>
<div class="a" style="left:33px;top:376px;width:1861px;height:1px;background:#e1e1e1"></div>
<div class="a" style="left:0px;top:376px;width:33px;height:1px;background:#8a8a8a"></div>
<div class="a" style="left:33px;top:402px;width:1861px;height:1px;background:#e1e1e1"></div>
<div class="a" style="left:0px;top:402px;width:33px;height:1px;background:#8a8a8a"></div>
<div class="a" style="left:33px;top:428px;width:1861px;height:1px;background:#e1e1e1"></div>
<div class="a" style="left:0px;top:428px;width:33px;height:1px;background:#8a8a8a"></div>
<div class="a" style="left:33px;top:454px;width:1861px;height:1px;background:#e1e1e1"></div>
<div class="a" style="left:0px;top:454px;width:33px;height:1px;background:#8a8a8a"></div>
<div class="a" style="left:33px;top:480px;width:1861px;height:1px;background:#e1e1e1"></div>
<div class="a" style="left:0px;top:480px;width:33px;height:1px;background:#8a8a8a"></div>
<div class="a" style="left:33px;top:506px;width:1861px;height:1px;background:#e1e1e1"></div>
<div class="a" style="left:0px;top:506px;width:33px;height:1px;background:#8a8a8a"></div>
<div class="a" style="left:33px;top:532px;width:1861px;height:1px;background:#e1e1e1"></div>
<div class="a" style="left:0px;top:532px;width:33px;height:1px;background:#8a8a8a"></div>
<div class="a" style="left:33px;top:558px;width:1861px;height:1px;background:#e1e1e1"></div>
<div class="a" style="left:0px;top:558px;width:33px;height:1px;background:#8a8a8a"></div>
<div class="a" style="left:33px;top:584px;width:1861px;height:1px;background:#e1e1e1"></div>
<div class="a" style="left:0px;top:584px;width:33px;height:1px;background:#8a8a8a"></div>
<div class="a" style="left:33px;top:610px;width:1861px;height:1px;background:#e1e1e1"></div>
<div class="a" style="left:0px;top:610px;width:33px;height:1px;background:#8a8a8a"></div>
<div class="a" style="left:33px;top:632px;width:1861px;height:1px;background:#e1e1e1"></div>
<div class="a" style="left:0px;top:632px;width:33px;height:1px;background:#8a8a8a"></div>
<div class="a" style="left:33px;top:654px;width:1861px;height:1px;background:#e1e1e1"></div>
<div class="a" style="left:0px;top:654px;width:33px;height:1px;background:#8a8a8a"></div>
<div class="a" style="left:33px;top:676px;width:1861px;height:1px;background:#e1e1e1"></div>
<div class="a" style="left:0px;top:676px;width:33px;height:1px;background:#8a8a8a"></div>
<div class="a" style="left:33px;top:698px;width:1861px;height:1px;background:#e1e1e1"></div>
<div class="a" style="left:0px;top:698px;width:33px;height:1px;background:#8a8a8a"></div>
<div class="a" style="left:33px;top:720px;width:1861px;height:1px;background:#e1e1e1"></div>
<div class="a" style="left:0px;top:720px;width:33px;height:1px;background:#8a8a8a"></div>
<div class="a" style="left:33px;top:742px;width:1861px;height:1px;background:#e1e1e1"></div>
<div class="a" style="left:0px;top:742px;width:33px;height:1px;background:#8a8a8a"></div>
<div class="a" style="left:33px;top:764px;width:1861px;height:1px;background:#e1e1e1"></div>
<div class="a" style="left:0px;top:764px;width:33px;height:1px;background:#8a8a8a"></div>
<div class="a" style="left:33px;top:786px;width:1861px;height:1px;background:#e1e1e1"></div>
<div class="a" style="left:0px;top:786px;width:33px;height:1px;background:#8a8a8a"></div>
<div class="a" style="left:33px;top:808px;width:1861px;height:1px;background:#e1e1e1"></div>
<div class="a" style="left:0px;top:808px;width:33px;height:1px;background:#8a8a8a"></div>
<div class="a" style="left:33px;top:830px;width:1861px;height:1px;background:#e1e1e1"></div>
<div class="a" style="left:0px;top:830px;width:33px;height:1px;background:#8a8a8a"></div>
<div class="a" style="left:33px;top:852px;width:1861px;height:1px;background:#e1e1e1"></div>
<div class="a" style="left:0px;top:852px;width:33px;height:1px;background:#8a8a8a"></div>
<div class="a" style="left:33px;top:874px;width:1861px;height:1px;background:#e1e1e1"></div>
<div class="a" style="left:0px;top:874px;width:33px;height:1px;background:#8a8a8a"></div>
<div class="a" style="left:33px;top:896px;width:1861px;height:1px;background:#e1e1e1"></div>
<div class="a" style="left:0px;top:896px;width:33px;height:1px;background:#8a8a8a"></div>
<div class="a" style="left:33px;top:918px;width:1861px;height:1px;background:#e1e1e1"></div>
<div class="a" style="left:0px;top:918px;width:33px;height:1px;background:#8a8a8a"></div>
<div class="a" style="left:33px;top:940px;width:1861px;height:1px;background:#e1e1e1"></div>
<div class="a" style="left:0px;top:940px;width:33px;height:1px;background:#8a8a8a"></div>
<div class="a" style="left:124px;top:293px;width:1px;height:660px;background:#e1e1e1"></div>
<div class="a" style="left:240px;top:293px;width:1px;height:660px;background:#e1e1e1"></div>
<div class="a" style="left:443px;top:293px;width:1px;height:660px;background:#e1e1e1"></div>
<div class="a" style="left:660px;top:293px;width:1px;height:660px;background:#e1e1e1"></div>
<div class="a" style="left:807px;top:293px;width:1px;height:660px;background:#e1e1e1"></div>
<div class="a" style="left:991px;top:293px;width:1px;height:660px;background:#e1e1e1"></div>
<div class="a" style="left:1172px;top:293px;width:1px;height:660px;background:#e1e1e1"></div>
<div class="a" style="left:1353px;top:293px;width:1px;height:660px;background:#e1e1e1"></div>
<div class="a" style="left:1536px;top:293px;width:1px;height:660px;background:#e1e1e1"></div>
<div class="a" style="left:1721px;top:293px;width:1px;height:660px;background:#e1e1e1"></div>
<div class="a" style="left:33px;top:293px;width:1861px;height:31px;background:#008000"></div>
<div class="a" style="left:33px;top:324px;width:1861px;height:26px;background:#4f81bd"></div>
<div class="a" style="left:33px;top:350px;width:1861px;height:26px;background:#ff6600"></div>
<div class="a" style="left:33px;top:376px;width:91px;height:26px;background:#008000"></div>
<div class="a" style="left:33px;top:402px;width:91px;height:26px;background:#4f81bd"></div>
<div class="a" style="left:33px;top:428px;width:91px;height:26px;background:#ff6600"></div>
<div class="a" style="left:33px;top:454px;width:91px;height:26px;background:#008000"></div>
<div class="a" style="left:33px;top:480px;width:91px;height:26px;background:#4f81bd"></div>
<div class="a" style="left:33px;top:506px;width:91px;height:26px;background:#4f81bd"></div>
<div class="a" style="left:33px;top:532px;width:91px;height:26px;background:#008000"></div>
<div class="a" style="left:33px;top:558px;width:91px;height:26px;background:#ff6600"></div>
<div class="a" style="left:33px;top:584px;width:91px;height:26px;background:#ff6600"></div>
<div class="a" style="left:124px;top:293px;width:1px;height:660px;background:#a8a8a8"></div>
<div class="t" style="left:-283.20px;width:600px;text-align:center;top:307.88px;font-size:15.5px;line-height:15.5px;color:#f4f4f4;">1</div>
<div class="t" style="left:-283.20px;width:600px;text-align:center;top:332.38px;font-size:15.5px;line-height:15.5px;color:#f4f4f4;">2</div>
<div class="t" style="left:-283.20px;width:600px;text-align:center;top:358.38px;font-size:15.5px;line-height:15.5px;color:#f4f4f4;">3</div>
<div class="t" style="left:-283.20px;width:600px;text-align:center;top:384.38px;font-size:15.5px;line-height:15.5px;color:#f4f4f4;">4</div>
<div class="t" style="left:-283.20px;width:600px;text-align:center;top:410.38px;font-size:15.5px;line-height:15.5px;color:#f4f4f4;">5</div>
<div class="t" style="left:-283.20px;width:600px;text-align:center;top:436.38px;font-size:15.5px;line-height:15.5px;color:#f4f4f4;">6</div>
<div class="t" style="left:-283.20px;width:600px;text-align:center;top:462.38px;font-size:15.5px;line-height:15.5px;color:#f4f4f4;">7</div>
<div class="t" style="left:-283.20px;width:600px;text-align:center;top:488.38px;font-size:15.5px;line-height:15.5px;color:#f4f4f4;">8</div>
<div class="t" style="left:-283.20px;width:600px;text-align:center;top:514.38px;font-size:15.5px;line-height:15.5px;color:#f4f4f4;">9</div>
<div class="t" style="left:-283.20px;width:600px;text-align:center;top:540.38px;font-size:15.5px;line-height:15.5px;color:#f4f4f4;">10</div>
<div class="t" style="left:-283.20px;width:600px;text-align:center;top:566.38px;font-size:15.5px;line-height:15.5px;color:#f4f4f4;">11</div>
<div class="t" style="left:-283.20px;width:600px;text-align:center;top:592.38px;font-size:15.5px;line-height:15.5px;color:#f4f4f4;">12</div>
<div class="t" style="left:-283.20px;width:600px;text-align:center;top:614.58px;font-size:15.5px;line-height:15.5px;color:#f4f4f4;">13</div>
<div class="t" style="left:-283.20px;width:600px;text-align:center;top:636.58px;font-size:15.5px;line-height:15.5px;color:#f4f4f4;">14</div>
<div class="t" style="left:-283.20px;width:600px;text-align:center;top:658.58px;font-size:15.5px;line-height:15.5px;color:#f4f4f4;">15</div>
<div class="t" style="left:-283.20px;width:600px;text-align:center;top:680.58px;font-size:15.5px;line-height:15.5px;color:#f4f4f4;">16</div>
<div class="t" style="left:-283.20px;width:600px;text-align:center;top:702.58px;font-size:15.5px;line-height:15.5px;color:#f4f4f4;">17</div>
<div class="t" style="left:-283.20px;width:600px;text-align:center;top:724.58px;font-size:15.5px;line-height:15.5px;color:#f4f4f4;">18</div>
<div class="t" style="left:-283.20px;width:600px;text-align:center;top:746.58px;font-size:15.5px;line-height:15.5px;color:#f4f4f4;">19</div>
<div class="t" style="left:-283.20px;width:600px;text-align:center;top:768.58px;font-size:15.5px;line-height:15.5px;color:#f4f4f4;">20</div>
<div class="t" style="left:-283.20px;width:600px;text-align:center;top:790.58px;font-size:15.5px;line-height:15.5px;color:#f4f4f4;">21</div>
<div class="t" style="left:-283.20px;width:600px;text-align:center;top:812.58px;font-size:15.5px;line-height:15.5px;color:#f4f4f4;">22</div>
<div class="t" style="left:-283.20px;width:600px;text-align:center;top:834.58px;font-size:15.5px;line-height:15.5px;color:#f4f4f4;">23</div>
<div class="t" style="left:-283.20px;width:600px;text-align:center;top:856.58px;font-size:15.5px;line-height:15.5px;color:#f4f4f4;">24</div>
<div class="t" style="left:-283.20px;width:600px;text-align:center;top:878.58px;font-size:15.5px;line-height:15.5px;color:#f4f4f4;">25</div>
<div class="t" style="left:-283.20px;width:600px;text-align:center;top:900.58px;font-size:15.5px;line-height:15.5px;color:#f4f4f4;">26</div>
<div class="t" style="left:-283.20px;width:600px;text-align:center;top:922.58px;font-size:15.5px;line-height:15.5px;color:#f4f4f4;">27</div>
<div class="t" style="left:-283.20px;width:600px;text-align:center;top:944.58px;font-size:15.5px;line-height:15.5px;color:#f4f4f4;">28</div>
<div class="t" style="left:37.00px;top:301.89px;font-size:17.5px;line-height:17.5px;color:#fbfff0;font-weight:bold;transform:scaleX(0.9202);transform-origin:0 0;">HEADER</div>
<div class="t" style="left:128.00px;top:301.89px;font-size:17.5px;line-height:17.5px;color:#fbfff0;font-weight:bold;">No Form</div>
<div class="t" style="left:244.00px;top:301.89px;font-size:17.5px;line-height:17.5px;color:#fbfff0;font-weight:bold;">Tgl Pesanan</div>
<div class="t" style="left:447.00px;top:301.89px;font-size:17.5px;line-height:17.5px;color:#e00000;font-weight:bold;">No Pemasok</div>
<div class="t" style="left:664.00px;top:301.89px;font-size:17.5px;line-height:17.5px;color:#fbfff0;font-weight:bold;">Alamat Kirim</div>
<div class="t" style="left:811.00px;top:301.89px;font-size:17.5px;line-height:17.5px;color:#fbfff0;font-weight:bold;">Kena PPN</div>
<div class="t" style="left:995.00px;top:301.89px;font-size:17.5px;line-height:17.5px;color:#fbfff0;font-weight:bold;">Total Termasuk PPN</div>
<div class="t" style="left:1176.00px;top:301.89px;font-size:17.5px;line-height:17.5px;color:#fbfff0;font-weight:bold;">Diskon Pesanan (%)</div>
<div class="t" style="left:1357.00px;top:301.89px;font-size:17.5px;line-height:17.5px;color:#fbfff0;font-weight:bold;">Diskon Pesanan (Rp)</div>
<div class="t" style="left:1540.00px;top:301.89px;font-size:17.5px;line-height:17.5px;color:#fbfff0;font-weight:bold;">Keterangan</div>
<div class="t" style="left:1725.00px;top:301.89px;font-size:17.5px;line-height:17.5px;color:#fbfff0;font-weight:bold;">Nama Cabang</div>
<div class="t" style="left:37.00px;top:330.79px;font-size:17.5px;line-height:17.5px;color:#fbfff0;font-weight:bold;transform:scaleX(0.9712);transform-origin:0 0;">ITEM</div>
<div class="t" style="left:128.00px;top:330.79px;font-size:17.5px;line-height:17.5px;color:#ff1a1a;font-weight:bold;">Kode Barang</div>
<div class="t" style="left:244.00px;top:330.79px;font-size:17.5px;line-height:17.5px;color:#fbfff0;font-weight:bold;">Nama Barang</div>
<div class="t" style="left:447.00px;top:330.79px;font-size:17.5px;line-height:17.5px;color:#ff1a1a;font-weight:bold;">Kuantitas</div>
<div class="t" style="left:664.00px;top:330.79px;font-size:17.5px;line-height:17.5px;color:#fbfff0;font-weight:bold;">Satuan</div>
<div class="t" style="left:811.00px;top:330.79px;font-size:17.5px;line-height:17.5px;color:#fbfff0;font-weight:bold;">Harga Satuan</div>
<div class="t" style="left:995.00px;top:330.79px;font-size:17.5px;line-height:17.5px;color:#fbfff0;font-weight:bold;">Diskon Barang (%)</div>
<div class="t" style="left:1176.00px;top:330.79px;font-size:17.5px;line-height:17.5px;color:#fbfff0;font-weight:bold;">Diskon Barang (Rp)</div>
<div class="t" style="left:1357.00px;top:330.79px;font-size:17.5px;line-height:17.5px;color:#fbfff0;font-weight:bold;">Catatan Barang</div>
<div class="t" style="left:1540.00px;top:330.79px;font-size:17.5px;line-height:17.5px;color:#fbfff0;font-weight:bold;">Nama Dept Barang</div>
<div class="t" style="left:1725.00px;top:330.79px;font-size:17.5px;line-height:17.5px;color:#fbfff0;font-weight:bold;">No Proyek Barang</div>
<div class="t" style="left:37.00px;top:356.59px;font-size:17.5px;line-height:17.5px;color:#fbfff0;font-weight:bold;transform:scaleX(0.8769);transform-origin:0 0;">EXPENSE</div>
<div class="t" style="left:128.00px;top:356.59px;font-size:17.5px;line-height:17.5px;color:#ff1a1a;font-weight:bold;">No Biaya</div>
<div class="t" style="left:244.00px;top:356.59px;font-size:17.5px;line-height:17.5px;color:#fbfff0;font-weight:bold;">Nama Biaya</div>
<div class="t" style="left:447.00px;top:356.59px;font-size:17.5px;line-height:17.5px;color:#fbfff0;font-weight:bold;">Nilai Biaya</div>
<div class="t" style="left:664.00px;top:356.59px;font-size:17.5px;line-height:17.5px;color:#fbfff0;font-weight:bold;">Catatan Biaya</div>
<div class="t" style="left:811.00px;top:356.59px;font-size:17.5px;line-height:17.5px;color:#fbfff0;font-weight:bold;">Nama Dept Biaya</div>
<div class="t" style="left:995.00px;top:356.59px;font-size:17.5px;line-height:17.5px;color:#fbfff0;font-weight:bold;">No Proyek Biaya</div>
<div class="t" style="left:1176.00px;top:356.59px;font-size:17.5px;line-height:17.5px;color:#fbfff0;font-weight:bold;">Kategori Keuangan 1</div>
<div class="t" style="left:1357.00px;top:356.59px;font-size:17.5px;line-height:17.5px;color:#fbfff0;font-weight:bold;">Kategori Keuangan 2</div>
<div class="t" style="left:1540.00px;top:356.59px;font-size:17.5px;line-height:17.5px;color:#fbfff0;font-weight:bold;">Kategori Keuangan 3</div>
<div class="t" style="left:1725.00px;top:356.59px;font-size:17.5px;line-height:17.5px;color:#fbfff0;font-weight:bold;">Kategori Keuangan 4</div>
<div class="t" style="left:37.00px;top:382.61px;font-size:17px;line-height:17px;color:#fbfff0;font-weight:bold;transform:scaleX(0.9473);transform-origin:0 0;">HEADER</div>
<div class="t" style="left:244.00px;top:383.88px;font-size:15.5px;line-height:15.5px;color:#000;transform:scaleX(1.0957);transform-origin:0 0;">25/04/2020</div>
<div class="t" style="left:447.00px;top:383.88px;font-size:15.5px;line-height:15.5px;color:#000;transform:scaleX(1.0386);transform-origin:0 0;">V.00001</div>
<div class="t" style="left:664.00px;top:383.88px;font-size:15.5px;line-height:15.5px;color:#000;transform:scaleX(0.9483);transform-origin:0 0;">Jakarta</div>
<div class="t" style="left:811.00px;top:383.88px;font-size:15.5px;line-height:15.5px;color:#000;transform:scaleX(0.8534);transform-origin:0 0;">Ya</div>
<div class="t" style="left:995.00px;top:383.88px;font-size:15.5px;line-height:15.5px;color:#000;transform:scaleX(0.9591);transform-origin:0 0;">Tidak</div>
<div class="t" style="left:1725.00px;top:383.88px;font-size:15.5px;line-height:15.5px;color:#000;transform:scaleX(0.8918);transform-origin:0 0;">BANGSAL</div>
<div class="t" style="left:37.00px;top:408.61px;font-size:17px;line-height:17px;color:#fbfff0;font-weight:bold;">ITEM</div>
<div class="t" style="right:1682.00px;top:409.88px;font-size:15.5px;line-height:15.5px;color:#000;transform:scaleX(1.0169);transform-origin:100% 0;">100001</div>
<div class="t" style="left:244.00px;top:409.88px;font-size:15.5px;line-height:15.5px;color:#000;transform:scaleX(0.9606);transform-origin:0 0;">10.00-20 SZ-253 GRAND V8</div>
<div class="t" style="right:1262.00px;top:409.88px;font-size:15.5px;line-height:15.5px;color:#000;transform:scaleX(1.0439);transform-origin:100% 0;">2</div>
<div class="t" style="left:664.00px;top:409.88px;font-size:15.5px;line-height:15.5px;color:#000;transform:scaleX(0.8669);transform-origin:0 0;">Pcs</div>
<div class="t" style="right:931.00px;top:409.88px;font-size:15.5px;line-height:15.5px;color:#000;transform:scaleX(1.0258);transform-origin:100% 0;">3400000</div>
<div class="t" style="right:569.00px;top:409.88px;font-size:15.5px;line-height:15.5px;color:#000;transform:scaleX(1.0278);transform-origin:100% 0;">20000</div>
<div class="t" style="left:1357.00px;top:409.88px;font-size:15.5px;line-height:15.5px;color:#000;transform:scaleX(0.9910);transform-origin:0 0;">cat barang 1</div>
<div class="t" style="left:1540.00px;top:409.88px;font-size:15.5px;line-height:15.5px;color:#000;transform:scaleX(0.8065);transform-origin:0 0;">DEF</div>
<div class="t" style="left:37.00px;top:434.61px;font-size:17px;line-height:17px;color:#fbfff0;font-weight:bold;transform:scaleX(0.9027);transform-origin:0 0;">EXPENSE</div>
<div class="t" style="right:1682.00px;top:435.88px;font-size:15.5px;line-height:15.5px;color:#000;transform:scaleX(1.0169);transform-origin:100% 0;">600001</div>
<div class="t" style="left:244.00px;top:435.88px;font-size:15.5px;line-height:15.5px;color:#000;transform:scaleX(0.9934);transform-origin:0 0;">biaya iklan 1</div>
<div class="t" style="right:1262.00px;top:435.88px;font-size:15.5px;line-height:15.5px;color:#000;transform:scaleX(1.0371);transform-origin:100% 0;">52000</div>
<div class="t" style="left:811.00px;top:435.88px;font-size:15.5px;line-height:15.5px;color:#000;transform:scaleX(0.8628);transform-origin:0 0;">ABC</div>
<div class="t" style="left:37.00px;top:460.61px;font-size:17px;line-height:17px;color:#fbfff0;font-weight:bold;transform:scaleX(0.9473);transform-origin:0 0;">HEADER</div>
<div class="t" style="left:244.00px;top:461.88px;font-size:15.5px;line-height:15.5px;color:#000;transform:scaleX(1.0957);transform-origin:0 0;">25/04/2020</div>
<div class="t" style="left:447.00px;top:461.88px;font-size:15.5px;line-height:15.5px;color:#000;transform:scaleX(1.0386);transform-origin:0 0;">V.00001</div>
<div class="t" style="left:664.00px;top:461.88px;font-size:15.5px;line-height:15.5px;color:#000;transform:scaleX(0.9372);transform-origin:0 0;">Cawang</div>
<div class="t" style="left:811.00px;top:461.88px;font-size:15.5px;line-height:15.5px;color:#000;transform:scaleX(0.8534);transform-origin:0 0;">Ya</div>
<div class="t" style="left:995.00px;top:461.88px;font-size:15.5px;line-height:15.5px;color:#000;transform:scaleX(0.8534);transform-origin:0 0;">Ya</div>
<div class="t" style="left:1725.00px;top:461.88px;font-size:15.5px;line-height:15.5px;color:#000;transform:scaleX(1.0351);transform-origin:0 0;">Outlet Ciputat</div>
<div class="t" style="left:37.00px;top:486.61px;font-size:17px;line-height:17px;color:#fbfff0;font-weight:bold;">ITEM</div>
<div class="t" style="right:1682.00px;top:487.88px;font-size:15.5px;line-height:15.5px;color:#000;transform:scaleX(1.0169);transform-origin:100% 0;">100001</div>
<div class="t" style="left:244.00px;top:487.88px;font-size:15.5px;line-height:15.5px;color:#000;transform:scaleX(0.9606);transform-origin:0 0;">10.00-20 SZ-253 GRAND V8</div>
<div class="t" style="right:1262.00px;top:487.88px;font-size:15.5px;line-height:15.5px;color:#000;transform:scaleX(1.0439);transform-origin:100% 0;">3</div>
<div class="t" style="left:664.00px;top:487.88px;font-size:15.5px;line-height:15.5px;color:#000;transform:scaleX(0.8669);transform-origin:0 0;">Pcs</div>
<div class="t" style="right:931.00px;top:487.88px;font-size:15.5px;line-height:15.5px;color:#000;transform:scaleX(1.0258);transform-origin:100% 0;">3200000</div>
<div class="t" style="right:569.00px;top:487.88px;font-size:15.5px;line-height:15.5px;color:#000;transform:scaleX(1.0278);transform-origin:100% 0;">40000</div>
<div class="t" style="left:1357.00px;top:487.88px;font-size:15.5px;line-height:15.5px;color:#000;transform:scaleX(0.9910);transform-origin:0 0;">cat barang 2</div>
<div class="t" style="left:1540.00px;top:487.88px;font-size:15.5px;line-height:15.5px;color:#000;transform:scaleX(0.8628);transform-origin:0 0;">ABC</div>
<div class="t" style="left:37.00px;top:512.61px;font-size:17px;line-height:17px;color:#fbfff0;font-weight:bold;">ITEM</div>
<div class="t" style="right:1682.00px;top:513.88px;font-size:15.5px;line-height:15.5px;color:#000;transform:scaleX(1.0169);transform-origin:100% 0;">100002</div>
<div class="a" style="left:241px;top:506px;width:202px;height:25px;overflow:hidden"><div class="t" style="left:3.00px;top:7.88px;font-size:15.5px;line-height:15.5px;color:#000;transform:scaleX(0.9656);transform-origin:0 0;">100/100-18 SB-137 ALL TERRAIN</div>
</div>
<div class="t" style="right:1262.00px;top:513.88px;font-size:15.5px;line-height:15.5px;color:#000;transform:scaleX(1.0439);transform-origin:100% 0;">2</div>
<div class="t" style="left:664.00px;top:513.88px;font-size:15.5px;line-height:15.5px;color:#000;transform:scaleX(0.8669);transform-origin:0 0;">Pcs</div>
<div class="t" style="right:931.00px;top:513.88px;font-size:15.5px;line-height:15.5px;color:#000;transform:scaleX(1.0305);transform-origin:100% 0;">554000</div>
<div class="t" style="right:569.00px;top:513.88px;font-size:15.5px;line-height:15.5px;color:#000;transform:scaleX(1.0278);transform-origin:100% 0;">40000</div>
<div class="t" style="left:1357.00px;top:513.88px;font-size:15.5px;line-height:15.5px;color:#000;transform:scaleX(0.9910);transform-origin:0 0;">cat barang 2</div>
<div class="t" style="left:1540.00px;top:513.88px;font-size:15.5px;line-height:15.5px;color:#000;transform:scaleX(0.8628);transform-origin:0 0;">ABC</div>
<div class="t" style="left:37.00px;top:538.61px;font-size:17px;line-height:17px;color:#fbfff0;font-weight:bold;transform:scaleX(0.9473);transform-origin:0 0;">HEADER</div>
<div class="t" style="left:244.00px;top:539.88px;font-size:15.5px;line-height:15.5px;color:#000;transform:scaleX(1.0957);transform-origin:0 0;">25/04/2020</div>
<div class="t" style="left:447.00px;top:539.88px;font-size:15.5px;line-height:15.5px;color:#000;transform:scaleX(1.0386);transform-origin:0 0;">V.00002</div>
<div class="t" style="left:664.00px;top:539.88px;font-size:15.5px;line-height:15.5px;color:#000;transform:scaleX(0.9372);transform-origin:0 0;">Cawang</div>
<div class="t" style="left:811.00px;top:539.88px;font-size:15.5px;line-height:15.5px;color:#000;transform:scaleX(0.8534);transform-origin:0 0;">Ya</div>
<div class="t" style="left:995.00px;top:539.88px;font-size:15.5px;line-height:15.5px;color:#000;transform:scaleX(0.8534);transform-origin:0 0;">Ya</div>
<div class="t" style="left:1725.00px;top:539.88px;font-size:15.5px;line-height:15.5px;color:#000;transform:scaleX(1.0351);transform-origin:0 0;">Outlet Ciputat</div>
<div class="t" style="left:37.00px;top:564.61px;font-size:17px;line-height:17px;color:#fbfff0;font-weight:bold;transform:scaleX(0.9027);transform-origin:0 0;">EXPENSE</div>
<div class="t" style="right:1682.00px;top:565.88px;font-size:15.5px;line-height:15.5px;color:#000;transform:scaleX(1.0169);transform-origin:100% 0;">600001</div>
<div class="t" style="left:244.00px;top:565.88px;font-size:15.5px;line-height:15.5px;color:#000;transform:scaleX(0.9934);transform-origin:0 0;">biaya iklan 1</div>
<div class="t" style="right:1262.00px;top:565.88px;font-size:15.5px;line-height:15.5px;color:#000;transform:scaleX(1.0305);transform-origin:100% 0;">300000</div>
<div class="t" style="left:664.00px;top:565.88px;font-size:15.5px;line-height:15.5px;color:#000;transform:scaleX(0.9846);transform-origin:0 0;">Catatan biaya 1</div>
<div class="t" style="left:811.00px;top:565.88px;font-size:15.5px;line-height:15.5px;color:#000;transform:scaleX(0.8628);transform-origin:0 0;">ABC</div>
<div class="t" style="left:37.00px;top:590.61px;font-size:17px;line-height:17px;color:#fbfff0;font-weight:bold;transform:scaleX(0.9027);transform-origin:0 0;">EXPENSE</div>
<div class="t" style="right:1682.00px;top:591.88px;font-size:15.5px;line-height:15.5px;color:#000;transform:scaleX(1.0169);transform-origin:100% 0;">600002</div>
<div class="t" style="left:244.00px;top:591.88px;font-size:15.5px;line-height:15.5px;color:#000;transform:scaleX(0.9603);transform-origin:0 0;">biaya 2</div>
<div class="t" style="right:1262.00px;top:591.88px;font-size:15.5px;line-height:15.5px;color:#000;transform:scaleX(1.0278);transform-origin:100% 0;">20000</div>
<div class="t" style="left:664.00px;top:591.88px;font-size:15.5px;line-height:15.5px;color:#000;transform:scaleX(0.9846);transform-origin:0 0;">Catatan biaya 2</div>
<div class="t" style="left:811.00px;top:591.88px;font-size:15.5px;line-height:15.5px;color:#000;transform:scaleX(0.8628);transform-origin:0 0;">ABC</div>
<div class="a" style="left:659px;top:557px;width:151px;height:29px;border:2px solid #217346;background:transparent"></div>
<div class="a" style="left:804px;top:582px;width:7px;height:6px;background:#fff"></div>
<div class="a" style="left:805px;top:582px;width:5px;height:5px;background:#217346"></div>
<div class="a" style="left:660px;top:290px;width:147px;height:3px;background:#2f8a63"></div>
<div class="a" style="left:32px;top:558px;width:2px;height:26px;background:#2e8b57"></div>
<div class="a" style="left:1894px;top:262px;width:25px;height:700px;background:#505050"></div>
<div class="a" style="left:1897px;top:271px;width:20px;height:683px;background:#3c3c3c;border-radius:10px"></div>
<svg class="a" style="left:1902px;top:276px;" width="11" height="9" viewBox="0 0 11 9"><path d="M5.5 0.5 L10.5 8.5 L0.5 8.5 Z" fill="#c4c4c4"/></svg>
<div class="a" style="left:1902px;top:291px;width:11px;height:616px;background:#c4c4c4;border-radius:6px"></div>
<svg class="a" style="left:1902px;top:940px;" width="11" height="9" viewBox="0 0 11 9"><path d="M0.5 0.5 L10.5 0.5 L5.5 8.5 Z" fill="#c4c4c4"/></svg>
<div class="a" style="left:120px;top:953px;width:300px;height:8px;background:#ffffff"></div>
<div class="a" style="left:0px;top:953px;width:141px;height:40px;background:#4e4e4e;border-top-right-radius:5px"></div>
<div class="a" style="left:394px;top:953px;width:1525px;height:40px;background:#4e4e4e;border-top-left-radius:5px"></div>
<div class="a" style="left:141px;top:960px;width:253px;height:33px;background:#4e4e4e"></div>
<div class="a" style="left:141px;top:953px;width:253px;height:35px;background:#ffffff;border-radius:0 0 5px 5px"></div>
<div class="a" style="left:0px;top:992px;width:1919px;height:1px;background:#3c3c3c"></div>
<svg class="a" style="left:30px;top:965px;" width="10" height="14" viewBox="0 0 10 14"><path d="M8 1 L2 7 L8 13" stroke="#9a9a9a" stroke-width="1.3" fill="none"/></svg>
<svg class="a" style="left:71px;top:965px;" width="10" height="14" viewBox="0 0 10 14"><path d="M2 1 L8 7 L2 13" stroke="#9a9a9a" stroke-width="1.3" fill="none"/></svg>
<div class="t" style="left:151.40px;top:962.21px;font-size:17px;line-height:17px;color:#000;transform:scaleX(1.0289);transform-origin:0 0;">Template Pesanan Pembelian</div>
<div class="a" style="left:151px;top:983px;width:233px;height:2px;background:#1e6b48"></div>
<div class="a" style="left:399px;top:961px;width:1px;height:24px;background:#9a9a9a"></div>
<div class="a" style="left:634px;top:961px;width:1px;height:24px;background:#9a9a9a"></div>
<div class="a" style="left:846px;top:961px;width:1px;height:24px;background:#9a9a9a"></div>
<div class="a" style="left:1087px;top:961px;width:1px;height:24px;background:#9a9a9a"></div>
<div class="t" style="left:418.50px;top:965.91px;font-size:17px;line-height:17px;color:#fff;transform:scaleX(0.9949);transform-origin:0 0;">Penjelasan Kolom Header</div>
<div class="t" style="left:652.00px;top:965.91px;font-size:17px;line-height:17px;color:#fff;">Penjelasan Kolom Item</div>
<div class="t" style="left:865.00px;top:965.91px;font-size:17px;line-height:17px;color:#fff;transform:scaleX(0.9812);transform-origin:0 0;">Penjelasan Kolom Expense</div>
<svg class="a" style="left:1139px;top:964px;" width="16" height="16" viewBox="0 0 16 16"><path d="M8 1 V15 M1 8 H15" stroke="#e8e8e8" stroke-width="1.4"/></svg>
<div class="a" style="left:1424px;top:966px;width:3px;height:3px;background:#e0e0e0"></div>
<div class="a" style="left:1424px;top:971px;width:3px;height:3px;background:#e0e0e0"></div>
<div class="a" style="left:1424px;top:976px;width:3px;height:3px;background:#e0e0e0"></div>
<div class="a" style="left:1447px;top:962px;width:447px;height:21px;background:#3c3c3c;border-radius:10px"></div>
<svg class="a" style="left:1450px;top:966px;" width="10" height="13" viewBox="0 0 10 13"><path d="M9 0.5 L9 12.5 L0.5 6.5 Z" fill="#c4c4c4"/></svg>
<div class="a" style="left:1466px;top:966px;width:76px;height:12px;background:#c4c4c4;border-radius:6px"></div>
<svg class="a" style="left:1879px;top:966px;" width="10" height="13" viewBox="0 0 10 13"><path d="M0.5 0.5 L0.5 12.5 L9 6.5 Z" fill="#c4c4c4"/></svg>
<div class="a" style="left:0px;top:993px;width:1919px;height:28px;background:#4e4e4e"></div>
<div class="a" style="left:0px;top:1020px;width:1919px;height:3px;background:#1e1e1e"></div>
<div class="t" style="left:13.90px;top:1000.13px;font-size:14.5px;line-height:14.5px;color:#f0f0f0;transform:scaleX(0.8613);transform-origin:0 0;">Ready</div>
<svg class="a" style="left:75px;top:998px;" width="22" height="20" viewBox="0 0 22 20"><path d="M9 16.5 H1.5 V1.5 H17.5 V8" stroke="#e6e6e6" stroke-width="1.5" fill="none"/><path d="M1.5 5 H17.5 M4 8.5 H7 M4 12 H7" stroke="#e6e6e6" stroke-width="1.4"/><circle cx="14" cy="13" r="5" stroke="#e6e6e6" stroke-width="1.5" fill="#4e4e4e"/><circle cx="14" cy="13" r="2.2" fill="#e6e6e6"/></svg>
<svg class="a" style="left:115px;top:997px;" width="22" height="22" viewBox="0 0 22 22"><circle cx="9.5" cy="3.5" r="2.2" stroke="#e6e6e6" stroke-width="1.3" fill="none"/><path d="M2 7 Q3 5.5 4.5 7 L8 8.5 H11 L14.5 7 Q16 5.5 17 7 L12.5 10.5 V13 L10.5 19 Q9 20.5 8 19 L9 13 L7 11 L4 9 Z" stroke="#e6e6e6" stroke-width="1.2" fill="none" stroke-linejoin="round"/><path d="M12 14 L19 21 M19 14 L12 21" stroke="#e6e6e6" stroke-width="1.2"/></svg>
<div class="t" style="left:138.60px;top:1000.13px;font-size:14.5px;line-height:14.5px;color:#f0f0f0;font-weight:bold;transform:scaleX(0.8738);transform-origin:0 0;">Accessibility: Investigate</div>
<div class="a" style="left:1548px;top:993px;width:50px;height:27px;background:#585858"></div>
<svg class="a" style="left:1562px;top:997px;" width="20" height="19" viewBox="0 0 20 19"><path d="M1.5 1.5 H18.5 V17.5 H1.5 Z M1.5 6.5 H18.5 M1.5 12 H18.5 M7 1.5 V17.5 M12.5 1.5 V17.5" stroke="#e8e8e8" stroke-width="1.4" fill="none"/></svg>
<svg class="a" style="left:1612px;top:997px;" width="20" height="19" viewBox="0 0 20 19"><rect x="1.5" y="1.5" width="17" height="16" stroke="#e8e8e8" stroke-width="1.4" fill="none"/><rect x="5" y="4.5" width="10" height="10" stroke="#e8e8e8" stroke-width="1.2" fill="none"/><path d="M7 8 H13 M7 11 H13" stroke="#e8e8e8" stroke-width="1.2"/></svg>
<svg class="a" style="left:1661px;top:997px;" width="20" height="19" viewBox="0 0 20 19"><path d="M1.5 1.5 H18.5 V17.5 H1.5 Z M5.5 1.5 V10 H12.5 V1.5 M8.5 1.5 V6" stroke="#e8e8e8" stroke-width="1.3" fill="none"/></svg>
<div class="a" style="left:1704px;top:1006px;width:11px;height:1px;background:#e8e8e8"></div>
<div class="a" style="left:1722px;top:1006px;width:124px;height:1px;background:#bfbfbf"></div>
<div class="a" style="left:1769px;top:999px;width:7px;height:15px;background:#cfcfcf;border-radius:1px"></div>
<div class="a" style="left:1784px;top:1003px;width:1px;height:7px;background:#bfbfbf"></div>
<svg class="a" style="left:1849px;top:999px;" width="14" height="14" viewBox="0 0 14 14"><path d="M7 1.5 V12.5 M1.5 7 H12.5" stroke="#e8e8e8" stroke-width="1.1"/></svg>
<div class="t" style="left:1876.80px;top:1000.75px;font-size:14px;line-height:14px;color:#f0f0f0;transform:scaleX(0.8815);transform-origin:0 0;">85%</div>
</body></html>
